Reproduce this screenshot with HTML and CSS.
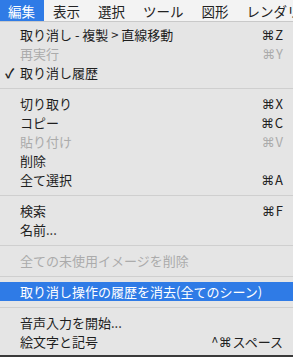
FILE: index.html
```html
<!DOCTYPE html>
<html lang="ja">
<head>
    <meta charset="UTF-8">
    <meta name="viewport" content="width=device-width, initial-scale=1.0">
    <title>編集メニュー</title>
    <link rel="stylesheet" href="styles.css">
</head>
<body>
    <div class="menubar">
        <span class="menubar-item active">編集</span>
        <span class="menubar-item">表示</span>
        <span class="menubar-item">選択</span>
        <span class="menubar-item">ツール</span>
        <span class="menubar-item">図形</span>
        <span class="menubar-item">レンダリング</span>
    </div>

    <div class="menu">
        <div class="item"><span class="label">取り消し - 複製 &gt; 直線移動</span><span class="key"><span class="cmd">⌘</span>Z</span></div>
        <div class="item disabled"><span class="label">再実行</span><span class="key"><span class="cmd">⌘</span>Y</span></div>
        <div class="item"><span class="check">✓</span><span class="label">取り消し履歴</span></div>
        <div class="sep"></div>
        <div class="item"><span class="label">切り取り</span><span class="key"><span class="cmd">⌘</span>X</span></div>
        <div class="item"><span class="label">コピー</span><span class="key"><span class="cmd">⌘</span>C</span></div>
        <div class="item disabled"><span class="label">貼り付け</span><span class="key"><span class="cmd">⌘</span>V</span></div>
        <div class="item"><span class="label">削除</span></div>
        <div class="item"><span class="label">全て選択</span><span class="key"><span class="cmd">⌘</span>A</span></div>
        <div class="sep"></div>
        <div class="item"><span class="label">検索</span><span class="key"><span class="cmd">⌘</span>F</span></div>
        <div class="item"><span class="label">名前...</span></div>
        <div class="sep"></div>
        <div class="item disabled"><span class="label">全ての未使用イメージを削除</span></div>
        <div class="sep"></div>
        <div class="item selected"><span class="label">取り消し操作の履歴を消去(全てのシーン)</span></div>
        <div class="sep"></div>
        <div class="item"><span class="label">音声入力を開始...</span></div>
        <div class="item"><span class="label">絵文字と記号</span><span class="key">^<span class="cmd">⌘</span>スペース</span></div>
    </div>
</body>
</html>
```

FILE: styles.css
```css
body {
    margin: 0;
    padding: 0;
    background-color: #3a3a3a;
    font-family: "Noto Sans CJK JP", "Noto Sans", sans-serif;
    color: #1e1e1e;
    overflow: hidden;
}
.menubar {
    display: flex;
    height: 22px;
    background: #f3f3f3;
    border-bottom: 1px solid #c9c9c9;
    box-sizing: border-box;
    white-space: nowrap;
    font-size: 13.5px;
    line-height: 22px;
}
.menubar-item {
    padding: 0 9px;
    color: #222;
}
.menubar-item.active {
    padding-left: 8px;
    background-color: #2f7be6;
    color: white;
}
.menu {
    background: #e5e5e5;
    padding: 3px 0 4px;
    font-size: 13px;
}
.item {
    position: relative;
    display: flex;
    justify-content: space-between;
    align-items: center;
    height: 19px;
    padding: 0 10px 0 20px;
    white-space: nowrap;
}
.check {
    position: absolute;
    left: 5px;
    top: 0;
    line-height: 19px;
    font-size: 13px;
    font-weight: bold;
}
.key {
    color: #222;
}
.cmd {
    font-family: "DejaVu Sans", sans-serif;
    font-size: 13px;
    margin-right: 1px;
}
.disabled .label,
.disabled .key {
    color: #ababab;
}
.selected {
    background-color: #2f7be6;
    color: white;
}
.sep {
    height: 12px;
    display: flex;
    align-items: center;
}
.sep::after {
    content: "";
    flex: 1;
    height: 1px;
    background: #cfcfcf;
}
```
